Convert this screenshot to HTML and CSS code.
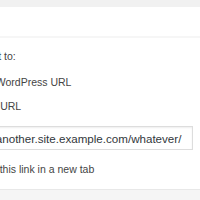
FILE: index.html
```html
<!DOCTYPE html>
<html lang="en">

<head>
    <meta charset="UTF-8">
    <title>Link settings</title>
    <link rel="stylesheet" href="styles.css">
</head>

<body>
    <div class="toolbar"></div>
    <div class="header"></div>
    <div class="panel">
        <p class="row title"><span class="cut">Redirec</span>t to:</p>
        <p class="row opt opt-wp"><span class="cut">Existing </span>WordPress URL</p>
        <p class="row opt opt-custom"><span class="cut">Custom </span>URL</p>
        <div class="field">
            <input type="text" value="https://another.site.example.com/whatever/">
        </div>
        <p class="row check"><span class="cut">Open </span>this link in a new tab</p>
    </div>
    <div class="footer"></div>
</body>

</html>
```

FILE: styles.css
```css
* {
    box-sizing: border-box;
    margin: 0;
    padding: 0;
}

body {
    font-family: "Liberation Sans", Arial, sans-serif;
    background-color: #fff;
    width: 200px;
    height: 200px;
    overflow: hidden;
    display: flex;
    flex-direction: column;
}

.toolbar {
    height: 7px;
    background-color: #f1f1f1;
}

.header {
    height: 31px;
    border-bottom: 2px solid #f6f6f6;
}

.panel {
    flex: 1;
    overflow: hidden;
    padding-top: 11px;
}

.row {
    font-size: 10.5px;
    line-height: 14px;
    color: #444;
    white-space: nowrap;
}

/* the left side of the dialog is scrolled off screen */
.row .cut {
    display: inline-block;
    visibility: hidden;
}

.title .cut { margin-left: -38px; }
.opt-wp .cut { margin-left: -41px; }
.opt-custom .cut { margin-left: -36px; }
.check .cut { margin-left: -26px; }

.opt {
    margin-top: 10px;
}

.title + .opt {
    margin-top: 12px;
}

.field {
    margin-top: 13px;
    margin-left: -44px;
    width: 237px;
}

.field input {
    width: 100%;
    height: 24px;
    border: 1px solid #ddd;
    box-shadow: inset 0 1px 2px rgba(0, 0, 0, 0.07);
    font-family: "Liberation Sans", Arial, sans-serif;
    font-size: 11.6px;
    color: #32373c;
    padding: 0 4px;
    outline: none;
}

.check {
    margin-top: 12px;
}

.footer {
    height: 11px;
    background-color: #f5f5f5;
    border-top: 1px solid #e8e8e8;
}
```
